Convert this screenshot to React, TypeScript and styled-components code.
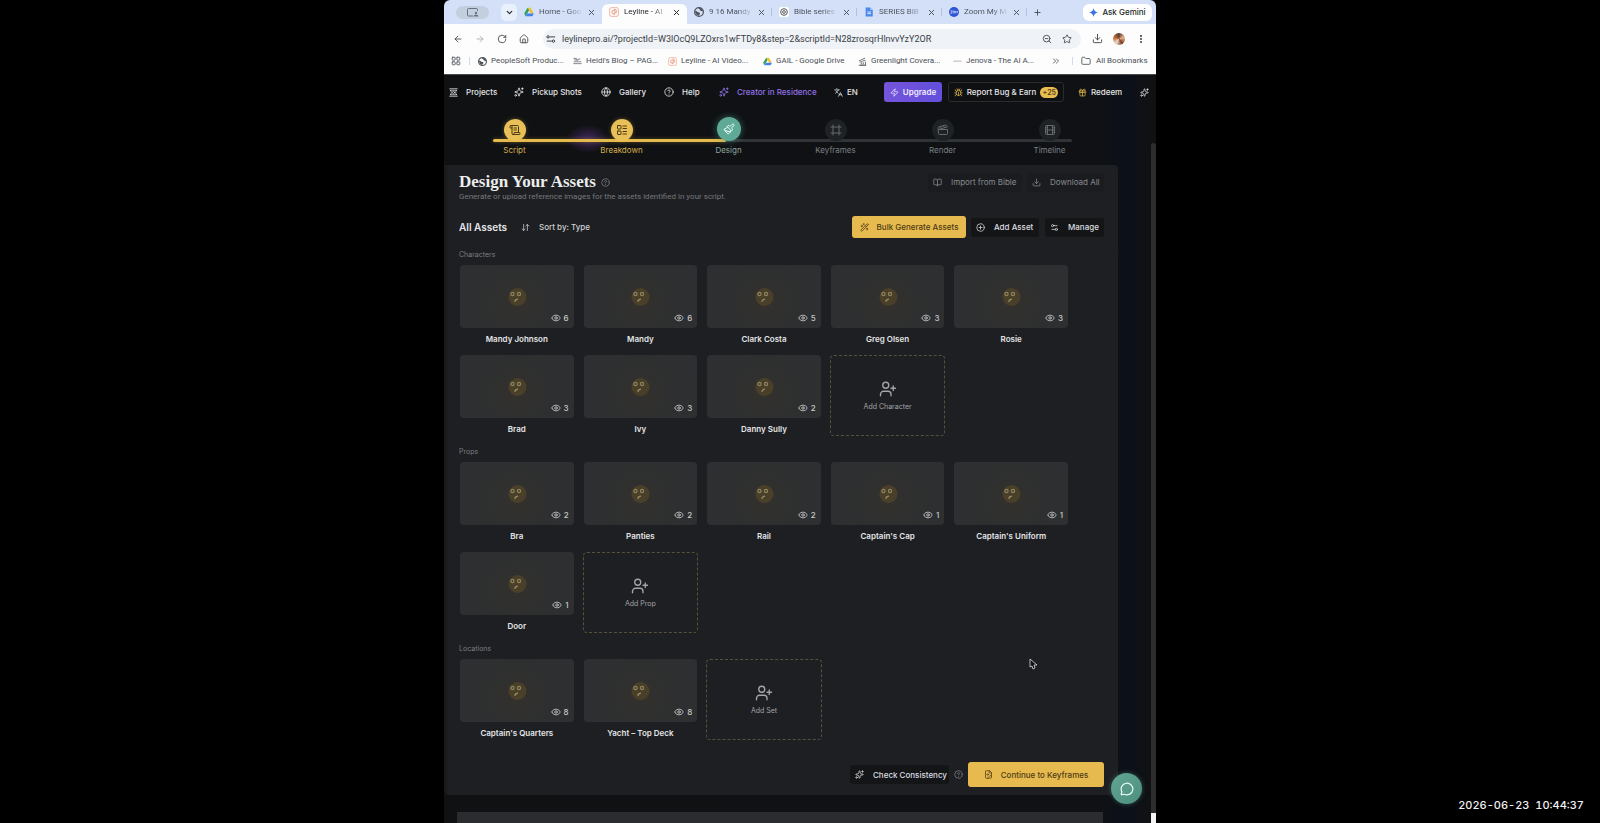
import React from "react";
import styled, { createGlobalStyle, css } from "styled-components";
import {
  ArrowDownUp, ArrowLeft, ArrowRight, BookOpen, Bug, ChevronDown, CirclePlus, CircleQuestionMark,
  Clapperboard, ChevronsRight, Download, Eye, FileImage, Film, Folder, Frame, Gift, Globe,
  House, Languages, LayoutGrid, LayoutList, MessageCircle, MoreVertical, Paintbrush, Plus,
  RotateCw, ScrollText, Settings2, Sparkles, Star, UserPlus, WandSparkles, X, Zap, ZoomOut,
} from "lucide-react";

const Global = createGlobalStyle`
  *, *::before, *::after { box-sizing: border-box; }
  html, body, #root { height: 100%; }
  body { margin: 0; background: #000; font-family: Inter, "Liberation Sans", sans-serif; font-size: 8px; line-height: 12px; overflow: hidden; }
  button, a, input { font: inherit; color: inherit; letter-spacing: inherit; }
  button { border: 0; background: none; padding: 0; margin: 0; cursor: pointer; white-space: nowrap; }
  a { text-decoration: none; white-space: nowrap; }
  svg { display: block; flex: none; }
  h1, h2, h3, p, ul { margin: 0; padding: 0; font-weight: inherit; font-size: inherit; }
`;

const Desktop = styled.div`
  position: relative;
  min-height: 100vh;
  display: flex;
  justify-content: center;
  background: #000;
`;

const Browser = styled.div`
  flex: 0 1 712px;
  min-width: 0;
  height: 100vh;
  display: flex;
  flex-direction: column;
  overflow: hidden;
  border-radius: 6px 6px 0 0;
  background: #0e1013;
`;

/* ---------- browser chrome ---------- */
const TabStrip = styled.div`
  display: flex;
  align-items: center;
  height: 24px;
  flex: none;
  padding: 0 4px 0 12px;
  background: #d3e0f8;
  color: #454b56;
`;
const ProfilePill = styled.button`
  display: grid;
  place-items: center;
  width: 33px;
  height: 13px;
  border-radius: 7px;
  background: #c3cede;
  color: #687080;
`;
const TabSearch = styled.button`
  display: grid;
  place-items: center;
  width: 16px;
  height: 17px;
  margin: 0 0 0 12px;
  border-radius: 5px;
  background: #e9f0fd;
  color: #222;
`;
const Tab = styled.div<{ $active?: boolean; $divided?: boolean }>`
  position: relative;
  display: flex;
  align-items: center;
  flex: none;
  width: 85px;
  height: ${p => (p.$active ? 20 : 16)}px;
  margin-top: ${p => (p.$active ? 4 : 0)}px;
  padding: ${p => (p.$active ? "0 5px 4px 7px" : "0 5px 0 7px")};
  border-radius: 6px 6px 0 0;
  background: ${p => (p.$active ? "#fdfdfe" : "transparent")};
  color: ${p => (p.$active ? "#25272b" : "#4d535e")};
  ${p => p.$divided && css`
    &::after { content: ""; position: absolute; right: 0; top: 4px; width: 1px; height: 8px; background: #b4c1da; }
  `}
`;
const TabTitle = styled.span`
  flex: 1;
  margin-left: 5px;
  white-space: nowrap;
  font-family: Roboto, sans-serif;
  mask-image: linear-gradient(90deg, #000 28px, transparent 44px);
`;
const IconButton = styled.button<{ $w?: number; $dim?: boolean }>`
  display: grid;
  place-items: center;
  flex: none;
  width: ${p => p.$w ?? 12}px;
  height: 16px;
  opacity: ${p => (p.$dim ? 0.45 : 1)};
`;
const Gemini = styled.button`
  display: flex;
  align-items: center;
  justify-content: center;
  gap: 4px;
  width: 69px;
  height: 17px;
  margin-left: auto;
  border-radius: 6px;
  background: #fff;
  color: #1d1f24;
  font-weight: 500;
`;
const Toolbar = styled.div`
  display: flex;
  align-items: center;
  flex: none;
  height: 29px;
  padding: 0 5px 0 2px;
  background: #fdfdfe;
  color: #3c4046;
`;
const AddressBar = styled.label`
  display: flex;
  align-items: center;
  flex: 1;
  min-width: 0;
  height: 20px;
  margin: 0 6px 0 8px;
  padding: 0 4px 0 3px;
  border-radius: 10px;
  background: #eff3f8;
`;
const AddressInput = styled.input`
  flex: 1;
  min-width: 0;
  height: 16px;
  margin-left: 6px;
  padding: 0;
  border: 0;
  outline: 0;
  background: transparent;
  color: #3a3d43;
  font-family: Roboto, sans-serif;
  font-size: 9px;
`;
const Bookmarks = styled.nav`
  display: flex;
  align-items: center;
  flex: none;
  height: 22px;
  padding: 0 9px 5px 7px;
  border-bottom: 1px solid #4a4a4c;
  background: #fdfdfe;
  color: #4a4e55;
  font-family: Roboto, sans-serif;
`;
const Bookmark = styled.a`
  display: flex;
  align-items: center;
  flex: none;
  gap: 4px;
  width: 95px;
`;
const AllBookmarks = styled.button`
  display: flex;
  align-items: center;
  gap: 5px;
`;
const Divider = styled.i`
  width: 1px;
  height: 8px;
  flex: none;
  background: #cfdcf0;
`;
const DividerSlot = styled.span`
  display: grid;
  place-items: center;
  flex: none;
  width: 17px;
`;
const Avatar = styled.span`
  width: 12px;
  height: 12px;
  border-radius: 50%;
  background: conic-gradient(#5b3a30, #e9b48c, #7b3f2a, #eedccb, #c16a36, #5b3a30);
`;

/* ---------- application ---------- */
const Page = styled.div`
  position: relative;
  flex: 1;
  min-height: 0;
  display: flex;
  flex-direction: column;
  background: linear-gradient(90deg, #101113 0, #0f1114 92%, #0c1019 96%, #0f1114 98%, #101112 100%);
  color: #e4e5e7;
`;
const Nav = styled.nav`
  display: flex;
  align-items: center;
  flex: none;
  height: 34px;
  padding-left: 5px;
  overflow: hidden;
  font-weight: 500;
`;
const NavLink = styled.a<{ $w: number; $accent?: boolean; $tight?: boolean }>`
  display: flex;
  align-items: center;
  flex: none;
  gap: ${p => (p.$tight ? 4 : 8)}px;
  width: ${p => p.$w}px;
  color: ${p => (p.$accent ? "#9373e6" : "inherit")};
`;
const Upgrade = styled.button`
  display: flex;
  align-items: center;
  justify-content: center;
  gap: 4px;
  flex: none;
  width: 58px;
  height: 20px;
  border-radius: 3px;
  background: linear-gradient(90deg, #7654dc, #624fdb);
  color: #f1edff;
  font-weight: 600;
`;
const Report = styled.button`
  display: flex;
  align-items: center;
  justify-content: center;
  gap: 4px;
  flex: none;
  width: 116px;
  height: 20px;
  margin: 0 14px 0 6px;
  border: 1px solid #2a2b2e;
  border-radius: 3px;
  background: #0f1012;
`;
const Badge = styled.b`
  width: 18px;
  height: 11px;
  border-radius: 6px;
  background: #e9bc50;
  color: #52401a;
  font-size: 7px;
  font-weight: 600;
  line-height: 11px;
  text-align: center;
`;

const Stepper = styled.ol`
  position: relative;
  isolation: isolate;
  display: flex;
  flex: none;
  height: 56px;
  margin: 0;
  padding: 8px 53px 0 17px;
  list-style: none;
  &::before, &::after {
    content: "";
    position: absolute;
    top: 30px;
    height: 3px;
    border-radius: 2px;
    z-index: -1;
  }
  &::before { left: 49px; right: 84px; background: #313437; }
  &::after { left: 49px; right: calc(50% + 74px); background: #e5ba4c; box-shadow: 0 0 4px #e5ba4c55; }
`;
const Glow = styled.i`
  position: absolute;
  z-index: -2;
  left: 122px;
  top: 16px;
  width: 44px;
  height: 28px;
  background: radial-gradient(closest-side, #4a2d6ecc, transparent);
`;
type StepState = "done" | "current" | "todo";
const stepBg = { done: "#e9bf58", current: "#5faa97", todo: "#1f2225" };
const stepInk = { done: "#4b3a12", current: "#f0fffb", todo: "#65696e" };
const stepText = { done: "#d5b04f", current: "#8fa8a1", todo: "#7c8085" };
const Step = styled.li<{ $state: StepState }>`
  display: flex;
  flex: 1;
  flex-direction: column;
  align-items: center;
  justify-content: flex-end;
  height: 39px;
  color: ${p => stepText[p.$state]};
  gap: 3px;
`;
const StepDot = styled.button<{ $state: StepState }>`
  display: grid;
  place-items: center;
  width: ${p => (p.$state === "current" ? 24 : 22)}px;
  height: ${p => (p.$state === "current" ? 24 : 22)}px;
  border-radius: 50%;
  background: ${p => stepBg[p.$state]};
  color: ${p => stepInk[p.$state]};
  box-shadow: ${p => (p.$state === "current" ? "0 0 7px #4ea08c99" : p.$state === "done" ? "0 0 4px #e9bf5855" : "none")};
`;

const Panel = styled.main`
  flex: none;
  margin-right: 38px;
  padding: 8px 14px 8px 15px;
  border-radius: 0 4px 6px 6px;
  background: linear-gradient(90deg, #18191a 0, #1e1f22 5px);
`;
const Row = styled.div<{ $h: number; $mt?: number }>`
  display: flex;
  align-items: center;
  height: ${p => p.$h}px;
  margin-top: ${p => p.$mt ?? 0}px;
`;
const Title = styled.h1`
  font: 700 17px/18px "Liberation Serif", serif;
  color: #eceded;
`;
const HelpButton = styled.button`
  margin: 0 5px;
  color: #7d8085;
`;
const Subtitle = styled.p`
  height: 12px;
  font-family: Roboto, sans-serif;
  color: #74777c;
`;
const Actions = styled.div`
  display: flex;
  align-items: center;
  margin-left: auto;
`;
const DarkButton = styled.button<{ $w: number; $muted?: boolean; $ml?: number }>`
  display: flex;
  align-items: center;
  gap: 9px;
  width: ${p => p.$w}px;
  height: 19px;
  margin-left: ${p => p.$ml ?? 0}px;
  padding-left: 5px;
  border-radius: 3px;
  background: ${p => (p.$muted ? "#1b1c1f" : "#141517")};
  color: ${p => (p.$muted ? "#888b90" : "#dddee0")};
  font-weight: ${p => (p.$muted ? 400 : 500)};
`;
const GoldButton = styled.button<{ $w: number; $h: number }>`
  display: flex;
  align-items: center;
  justify-content: center;
  gap: 8px;
  width: ${p => p.$w}px;
  height: ${p => p.$h}px;
  border-radius: 3px;
  background: #e6ba4f;
  color: #4d3b14;
  font-weight: 500;
`;
const AssetsHeading = styled.h2`
  width: 62px;
  font-size: 10px;
  font-weight: 600;
`;
const SortButton = styled.button`
  display: flex;
  align-items: center;
  gap: 9px;
  font-weight: 500;
  color: #cfd0d3;
`;
const AssetGroups = styled.div`
  padding: 1px 35px 0 0;
`;
const Section = styled.section`
  margin-top: 10px;
`;
const SectionLabel = styled.h3`
  height: 12px;
  margin-bottom: 4px;
  color: #7b7e83;
  font-size: 7px;
`;
const Grid = styled.ul`
  display: grid;
  grid-template-columns: repeat(5, minmax(0, 1fr));
  gap: 9px 8px;
  list-style: none;
`;
const Cell = styled.li`
  height: 81px;
`;
const Card = styled.button`
  display: block;
  width: 100%;
  height: 100%;
  padding: 0 1px 1px;
  font-weight: 600;
`;
const Thumb = styled.span`
  position: relative;
  display: grid;
  place-items: center;
  height: 63px;
  margin-bottom: 5px;
  border-radius: 4px;
  background: radial-gradient(circle at 50% 60%, #33312d 0, #2e2f2f 40%, #2d2f32 100%);
`;
const Views = styled.span`
  position: absolute;
  right: 5px;
  bottom: 4px;
  display: flex;
  align-items: center;
  gap: 3px;
  font-weight: 500;
  color: #c9cacb;
`;
const AddCard = styled.button`
  display: flex;
  flex-direction: column;
  align-items: center;
  justify-content: center;
  gap: 3px;
  width: 100%;
  height: 100%;
  padding-top: 2px;
  border: 1px dashed #55513b;
  border-radius: 4px;
  color: #a3a5a8;
  font-size: 7px;
`;
const NextBlock = styled.div`
  flex: 1;
  margin: 17px 53px 0 13px;
  background: #2b2c30;
`;
const ScrollTrack = styled.div`
  position: absolute;
  top: 68px;
  right: 0;
  bottom: 0;
  width: 5px;
  border-radius: 3px 3px 0 0;
  background: linear-gradient(#2b2d2f 0 calc(100% - 10px), #f4f4f4 calc(100% - 10px));
`;
const Chat = styled.button`
  position: absolute;
  right: 14px;
  bottom: 19px;
  display: grid;
  place-items: center;
  width: 31px;
  height: 31px;
  border-radius: 50%;
  background: linear-gradient(135deg, #64a593, #4b8f7e);
  color: #eafff8;
  box-shadow: 0 0 5px #4b8f7e88;
`;
const Pointer = styled.svg`
  position: absolute;
  left: 585px;
  top: 583px;
`;
const Clock = styled.time`
  position: absolute;
  right: 16px;
  bottom: 10px;
  color: #f2f2f2;
  font: 500 11px/16px Inter, sans-serif;
  font-variant-numeric: tabular-nums;
  white-space: pre;
`;

/* ---------- drawings ---------- */
const Drive = ({ s = 10 }: { s?: number }) => (
  <svg width={s} height={s} viewBox="0 0 24 24" aria-hidden="true">
    <path d="M8.5 2h7l8 13.5h-7z" fill="#f5bf2b" />
    <path d="M8.5 2l3.6 6L4 22 .5 15.5z" fill="#32a05a" />
    <path d="M8 15.5h15.5L20 22H4z" fill="#4280ef" />
  </svg>
);
const Swirl = ({ s = 10 }: { s?: number }) => (
  <svg width={s} height={s} viewBox="0 0 24 24" fill="none" stroke="#de7f63" strokeWidth="1.8" aria-hidden="true">
    <rect x="1" y="1" width="22" height="22" rx="6" fill="#fff4f0" stroke="#eaa896" />
    <path d="M12 5c5 0 7 4 5 8s-9 5-10 0 5-7 7-4-1 5-2 3M12 19v-3" />
  </svg>
);
const Earth = ({ s = 9 }: { s?: number }) => (
  <svg width={s} height={s} viewBox="0 0 24 24" aria-hidden="true">
    <circle cx="12" cy="12" r="10.5" fill="none" stroke="#50545b" strokeWidth="3" />
    <path d="M3 9c4 0 5 4 9 4s2 5-1 8C5 20 2 14 3 9zM11 2c0 4 3 3 4 6s5 2 7 3c0-5-5-9-11-9z" fill="#50545b" />
  </svg>
);
const Knot = () => (
  <svg width="10" height="10" viewBox="0 0 24 24" fill="none" stroke="#555a62" strokeWidth="2.4" aria-hidden="true">
    <rect width="24" height="24" rx="5" fill="#fff" stroke="none" />
    <circle cx="12" cy="12" r="8" /><circle cx="12" cy="12" r="3.4" />
  </svg>
);
const Doc = () => (
  <svg width="10" height="10" viewBox="0 0 24 24" aria-hidden="true">
    <path d="M4 1h11l6 6v16H4z" fill="#4b87ee" /><path d="M15 1l6 6h-6z" fill="#a9c8fb" />
    <path d="M8 12h9M8 16h9" stroke="#fff" strokeWidth="2" />
  </svg>
);
const ZoomMark = () => (
  <svg width="10" height="10" viewBox="0 0 24 24" aria-hidden="true">
    <circle cx="12" cy="12" r="12" fill="#2f55d4" />
    <path d="M4 9h4l-4 6h4M10 12a2 3 0 1 0 4 0 2 3 0 1 0-4 0M16 15v-5l2 2 2-2v5" stroke="#dfe7ff" strokeWidth="1.6" fill="none" />
  </svg>
);
const Skyline = () => (
  <svg width="9" height="8" viewBox="0 0 24 20" fill="none" stroke="#62666c" strokeWidth="2" aria-hidden="true">
    <path d="M1 3h8v5h4V5h7M1 17h22M2 12h20M3 7h5" />
  </svg>
);
const Greenlight = () => (
  <svg width="9" height="9" viewBox="0 0 24 24" fill="none" stroke="#62666c" strokeWidth="2.4" aria-hidden="true">
    <path d="M3 10l16-7M4 13c5 3 10-6 16-3M5 22h15V13M9 15v5M14 14v6M2 22h20" />
  </svg>
);
const Dash = () => (
  <svg width="9" height="9" viewBox="0 0 24 24" aria-hidden="true"><path d="M1 11h22" stroke="#9a9da2" strokeWidth="2" /></svg>
);
const Spark = () => (
  <svg width="9" height="9" viewBox="0 0 24 24" aria-hidden="true">
    <path d="M12 0c1 7 5 11 12 12-7 1-11 5-12 12C11 17 7 13 0 12 7 11 11 7 12 0z" fill="#3d74e0" />
  </svg>
);
const Tune = () => (
  <svg width="10" height="10" viewBox="0 0 24 24" fill="none" stroke="#3c4046" strokeWidth="2.4" aria-hidden="true">
    <path d="M9 7h13M2 17h12" /><circle cx="5" cy="7" r="2.8" /><circle cx="18" cy="17" r="2.8" />
  </svg>
);
const Reel = () => (
  <svg width="9" height="9" viewBox="0 0 24 24" fill="none" stroke="currentColor" strokeWidth="2" strokeLinecap="round" aria-hidden="true">
    <path d="M2 2h20M2 22h20M4 6h16M4 18h16M4 6c3 4 3 8 0 12M20 6c-3 4-3 8 0 12" /><circle cx="12" cy="12" r="3" />
  </svg>
);
const ProfileGlyph = () => (
  <svg width="12" height="9" viewBox="0 0 24 18" fill="none" stroke="currentColor" strokeWidth="2" aria-hidden="true">
    <path d="M12 16H3a2 2 0 0 1-2-2V3a2 2 0 0 1 2-2h16a2 2 0 0 1 2 2v3" /><circle cx="18" cy="10" r="2.4" fill="currentColor" stroke="none" />
    <path d="M13 17c0-5 10-5 10 0z" fill="currentColor" stroke="none" />
  </svg>
);
const Face = () => (
  <svg width="20" height="20" viewBox="0 0 20 20" fill="none" aria-hidden="true">
    <circle cx="10.5" cy="10" r="9" fill="#4a4029" />
    <circle cx="5.5" cy="7" r="1.6" stroke="#8d8360" strokeWidth="1.2" />
    <circle cx="12" cy="7" r="1.6" stroke="#8d8360" strokeWidth="1.2" />
    <path d="M8 14.500c0-1.500 1-2 2.500-2.300" stroke="#9c9067" strokeWidth="1.200" strokeLinecap="round" />
  </svg>
);

/* ---------- data ---------- */
const tabs = [
  { title: "Home - Goo", icon: <Drive /> },
  { title: "Leyline - AI", icon: <Swirl />, active: true },
  { title: "9 16 Mandy", icon: <Earth s={10} />, divided: true },
  { title: "Bible series", icon: <Knot />, divided: true },
  { title: "SERIES BIB", icon: <Doc />, divided: true },
  { title: "Zoom My M", icon: <ZoomMark />, divided: true },
];
const bookmarks = [
  { title: "PeopleSoft Produc...", icon: <Earth /> },
  { title: "Heidi's Blog – PAG...", icon: <Skyline /> },
  { title: "Leyline - AI Video...", icon: <Swirl s={9} /> },
  { title: "GAIL - Google Drive", icon: <Drive s={9} /> },
  { title: "Greenlight Covera...", icon: <Greenlight /> },
  { title: "Jenova - The AI A...", icon: <Dash /> },
];
const steps: { name: string; state: StepState; Icon: typeof Film }[] = [
  { name: "Script", state: "done", Icon: ScrollText },
  { name: "Breakdown", state: "done", Icon: LayoutList },
  { name: "Design", state: "current", Icon: Paintbrush },
  { name: "Keyframes", state: "todo", Icon: Frame },
  { name: "Render", state: "todo", Icon: Clapperboard },
  { name: "Timeline", state: "todo", Icon: Film },
];
const groups: { label: string; add: string; items: [string, number][] }[] = [
  { label: "Characters", add: "Add Character", items: [["Mandy Johnson", 6], ["Mandy", 6], ["Clark Costa", 5], ["Greg Olsen", 3], ["Rosie", 3], ["Brad", 3], ["Ivy", 3], ["Danny Sully", 2]] },
  { label: "Props", add: "Add Prop", items: [["Bra", 2], ["Panties", 2], ["Rail", 2], ["Captain's Cap", 1], ["Captain's Uniform", 1], ["Door", 1]] },
  { label: "Locations", add: "Add Set", items: [["Captain's Quarters", 8], ["Yacht – Top Deck", 8]] },
];

export default function App() {
  return (
    <Desktop>
      <Global />
      <Browser>
        <TabStrip>
          <ProfilePill aria-label="Profile"><ProfileGlyph /></ProfilePill>
          <TabSearch aria-label="Search tabs"><ChevronDown size={9} strokeWidth={3} /></TabSearch>
          {tabs.map(t => (
            <Tab key={t.title} $active={t.active} $divided={t.divided}>
              {t.icon}
              <TabTitle>{t.title}</TabTitle>
              <IconButton aria-label="Close tab"><X size={9} strokeWidth={2.6} /></IconButton>
            </Tab>
          ))}
          <IconButton $w={20} aria-label="New tab"><Plus size={9} strokeWidth={2.4} /></IconButton>
          <Gemini><Spark />Ask Gemini</Gemini>
        </TabStrip>
        <Toolbar>
          <IconButton $w={23} aria-label="Back"><ArrowLeft size={10} /></IconButton>
          <IconButton $w={22} $dim aria-label="Forward"><ArrowRight size={10} /></IconButton>
          <IconButton $w={22} aria-label="Reload"><RotateCw size={10} /></IconButton>
          <IconButton $w={22} aria-label="Home"><House size={10} /></IconButton>
          <AddressBar>
            <Tune />
            <AddressInput aria-label="Address" defaultValue="leylinepro.ai/?projectId=W3lOcQ9LZOxrs1wFTDy8&step=2&scriptId=N28zrosqrHlnvvYzY2OR" />
            <IconButton $w={20} aria-label="Zoom"><ZoomOut size={10} /></IconButton>
            <IconButton $w={20} aria-label="Bookmark this tab"><Star size={10} /></IconButton>
          </AddressBar>
          <IconButton $w={20} aria-label="Downloads"><Download size={11} /></IconButton>
          <IconButton $w={24} aria-label="Account"><Avatar /></IconButton>
          <IconButton $w={20} aria-label="Menu"><MoreVertical size={10} strokeWidth={3} /></IconButton>
        </Toolbar>
        <Bookmarks>
          <IconButton $w={10} aria-label="Apps"><LayoutGrid size={10} /></IconButton>
          <DividerSlot><Divider /></DividerSlot>
          {bookmarks.map(b => (
            <Bookmark key={b.title} href="#">{b.icon}{b.title}</Bookmark>
          ))}
          <IconButton $w={16} aria-label="More bookmarks"><ChevronsRight size={10} /></IconButton>
          <DividerSlot><Divider /></DividerSlot>
          <AllBookmarks><Folder size={10} />All Bookmarks</AllBookmarks>
        </Bookmarks>

        <Page>
          <Nav>
            <NavLink href="#" $w={65}><Reel />Projects</NavLink>
            <NavLink href="#" $w={87}><Sparkles size={10} />Pickup Shots</NavLink>
            <NavLink href="#" $w={63}><Globe size={10} />Gallery</NavLink>
            <NavLink href="#" $w={55}><CircleQuestionMark size={10} />Help</NavLink>
            <NavLink href="#" $w={115} $accent><Sparkles size={10} />Creator in Residence</NavLink>
            <NavLink href="#" $w={50} $tight><Languages size={9} />EN</NavLink>
            <Upgrade><Zap size={9} />Upgrade</Upgrade>
            <Report><Bug size={9} color="#d9b046" />Report Bug &amp; Earn<Badge>+25</Badge></Report>
            <NavLink href="#" $w={62} $tight><Gift size={9} color="#d9b046" />Redeem</NavLink>
            <NavLink href="#" $w={10} aria-label="Credits"><Sparkles size={9} /></NavLink>
          </Nav>

          <Stepper>
            {steps.map(({ name, state, Icon }) => (
              <Step key={name} $state={state}>
                <StepDot $state={state} aria-label={name}><Icon size={12} /></StepDot>
                {name}
              </Step>
            ))}
            <Glow />
          </Stepper>

          <Panel>
            <Row $h={18}>
              <Title>Design Your Assets</Title>
              <HelpButton aria-label="About assets"><CircleQuestionMark size={9} /></HelpButton>
              <Actions>
                <DarkButton $w={94} $muted><BookOpen size={9} />Import from Bible</DarkButton>
                <DarkButton $w={77} $ml={5} $muted><Download size={9} />Download All</DarkButton>
              </Actions>
            </Row>
            <Subtitle>Generate or upload reference images for the assets identified in your script.</Subtitle>

            <Row $h={22} $mt={13}>
              <AssetsHeading>All Assets</AssetsHeading>
              <SortButton><ArrowDownUp size={9} />Sort by: Type</SortButton>
              <Actions>
                <GoldButton $w={114} $h={22}><WandSparkles size={9} />Bulk Generate Assets</GoldButton>
                <DarkButton $w={68} $ml={5}><CirclePlus size={9} />Add Asset</DarkButton>
                <DarkButton $w={59} $ml={6}><Settings2 size={9} />Manage</DarkButton>
              </Actions>
            </Row>

            <AssetGroups>
              {groups.map(g => (
                <Section key={g.label}>
                  <SectionLabel>{g.label}</SectionLabel>
                  <Grid>
                    {g.items.map(([name, views]) => (
                      <Cell key={name}>
                        <Card>
                          <Thumb><Face /><Views><Eye size={10} />{views}</Views></Thumb>
                          {name}
                        </Card>
                      </Cell>
                    ))}
                    <Cell><AddCard><UserPlus size={18} strokeWidth={1.8} />{g.add}</AddCard></Cell>
                  </Grid>
                </Section>
              ))}
            </AssetGroups>

            <Row $h={25} $mt={22}>
              <Actions>
                <DarkButton $w={99}><Sparkles size={9} />Check Consistency</DarkButton>
                <HelpButton aria-label="About consistency"><CircleQuestionMark size={9} /></HelpButton>
                <GoldButton $w={136} $h={25}><FileImage size={9} />Continue to Keyframes</GoldButton>
              </Actions>
            </Row>
          </Panel>
          <NextBlock />
          <ScrollTrack />
          <Chat aria-label="Open chat"><MessageCircle size={14} /></Chat>
          <Pointer width="9" height="12" viewBox="0 0 9 12" aria-hidden="true">
            <path d="M1 1v8l2-1 1 3 2-1-1-3h3z" fill="#111" stroke="#ddd" strokeWidth="0.8" />
          </Pointer>
        </Page>
      </Browser>
      <Clock>{"2026-06-23  10:44:37"}</Clock>
    </Desktop>
  );
}
